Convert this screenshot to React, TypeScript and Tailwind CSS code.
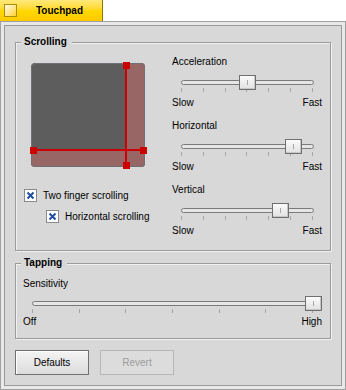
import React from 'react';

type SliderProps = {
  width: string;
  thumb: number;
  left: string;
  right: string;
  labelGap: string;
  endGap: string;
};

function Thumb({ left }: { left: number }) {
  return (
    <div
      className="absolute top-0 flex h-[15px] w-[17px] items-center justify-center border border-[#6f6f6f] bg-gradient-to-b from-[#fbfbfb] to-[#e1e1e1] shadow-[inset_-1px_-1px_0_#c6c6c6]"
      style={{ left }}
    >
      <div className="h-[5px] w-px bg-[#a8a8a8]" />
    </div>
  );
}

function Slider({ width, thumb, left, right, labelGap, endGap }: SliderProps) {
  return (
    <div className={width}>
      <div className={`relative h-[15px] ${labelGap}`}>
        <div className="pl-[9px] pr-[8px] pt-[5px]">
          <div className="h-[5px] rounded-full border border-[#7a7a7a] bg-[#e6e6e6]" />
        </div>
        <Thumb left={thumb} />
      </div>
      <div className="mx-[9px] -mt-[2px] flex h-[4px] justify-between">
        {[0, 1, 2, 3, 4, 5, 6].map((i) => (
          <div key={i} className="h-full w-px bg-[#a6a6a6]" />
        ))}
      </div>
      <div className={`flex justify-between leading-[12px] ${endGap}`}>
        <span>{left}</span>
        <span>{right}</span>
      </div>
    </div>
  );
}

function Checkbox({ label, className }: { label: string; className: string }) {
  return (
    <div className={`flex h-[13px] items-center gap-[6px] ${className}`}>
      <div className="h-[13px] w-[13px] border border-[#8a8a8a] bg-white">
        <svg width="11" height="11" viewBox="0 0 11 11">
          <path d="M2.5 2.5 L8.5 8.5 M8.5 2.5 L2.5 8.5" stroke="#1f4f9e" strokeWidth="2" />
        </svg>
      </div>
      <span className="leading-[12px]">{label}</span>
    </div>
  );
}

function Touchpad() {
  return (
    <svg width="120" height="110" viewBox="0 0 120 110" className="ml-[13px] block">
      <defs>
        <clipPath id="pad">
          <rect x="2" y="2" width="114" height="104" rx="4" />
        </clipPath>
      </defs>
      <rect x="2" y="2" width="114" height="104" rx="4" fill="#5d5d5d" />
      <g clipPath="url(#pad)">
        <rect x="97" y="0" width="20" height="110" fill="#996666" />
        <rect x="0" y="89" width="120" height="20" fill="#996666" />
      </g>
      <rect x="2.5" y="2.5" width="113" height="103" rx="4" fill="none" stroke="#6f6f78" />
      <path d="M97 4 V104 M4 89 H115" stroke="#cc0000" strokeWidth="2" />
      <rect x="94" y="1" width="7" height="7" fill="#cc0000" />
      <rect x="94" y="101" width="7" height="7" fill="#cc0000" />
      <rect x="1" y="86" width="7" height="7" fill="#cc0000" />
      <rect x="111" y="86" width="7" height="7" fill="#cc0000" />
    </svg>
  );
}

function Group({ title, className, children }: { title: string; className: string; children: React.ReactNode }) {
  return (
    <div className={`relative mx-[10px] border border-[#9c9c9c] shadow-[inset_1px_1px_0_#f0f0f0,1px_1px_0_#f0f0f0] ${className}`}>
      <div className="absolute -top-[7px] left-[5px] bg-[#d8d8d8] pl-[3px] pr-[5px] font-bold leading-[12px]">
        {title}
      </div>
      {children}
    </div>
  );
}

export default function App() {
  const groups = [
    { label: 'Acceleration', thumb: 67 },
    { label: 'Horizontal', thumb: 113 },
    { label: 'Vertical', thumb: 100 },
  ];

  return (
    <div className="h-[390px] w-[346px] bg-white font-['Liberation_Sans',Arial,sans-serif] text-[10px] text-black">
      <div className="flex h-[21px] w-[103px] items-center border-r border-[#8c7800] bg-gradient-to-b from-[#ffe878] via-[#ffd800] to-[#ffca00]">
        <div className="ml-[4px] h-[13px] w-[13px] border border-[#a88f10] bg-gradient-to-br from-[#fffbe0] to-[#ffd000]" />
        <div className="flex-1 text-center font-bold leading-[12px]">Touchpad</div>
      </div>
      <div className="h-[369px] border border-[#a0a0a0] bg-[#e8e8e8] p-[3px]">
        <div className="h-full border border-[#9a9a9a] bg-[#d8d8d8]">
          <Group title="Scrolling" className="mt-[16px] flex">
            <div className="w-[156px] pt-[18px] pb-[27px]">
              <Touchpad />
              <Checkbox label="Two finger scrolling" className="ml-[8px] mt-[18px]" />
              <Checkbox label="Horizontal scrolling" className="ml-[30px] mt-[8px]" />
            </div>
            <div className="flex w-[150px] flex-col gap-[11px] pt-[13px]">
              {groups.map((g) => (
                <div key={g.label}>
                  <div className="leading-[12px]">{g.label}</div>
                  <Slider width="w-[150px]" thumb={g.thumb} left="Slow" right="Fast" labelGap="mt-[7px]" endGap="mt-[5px]" />
                </div>
              ))}
            </div>
          </Group>
          <Group title="Tapping" className="mt-[12px] pl-[7px] pt-[14px] pb-[10px]">
            <div className="leading-[12px]">Sensitivity</div>
            <Slider width="w-[299px]" thumb={282} left="Off" right="High" labelGap="mt-[6px]" endGap="mt-[3px]" />
          </Group>
          <div className="ml-[10px] mt-[11px] flex gap-[11px]">
            <button className="h-[25px] w-[74px] border border-[#707070] bg-gradient-to-b from-[#f4f4f4] to-[#dcdcdc] leading-[12px] shadow-[inset_1px_1px_0_#ffffff]">
              Defaults
            </button>
            <button className="h-[25px] w-[74px] border border-[#b6b6b6] bg-[#dcdcdc] leading-[12px] text-[#9c9c9c]" disabled>
              Revert
            </button>
          </div>
        </div>
      </div>
    </div>
  );
}
